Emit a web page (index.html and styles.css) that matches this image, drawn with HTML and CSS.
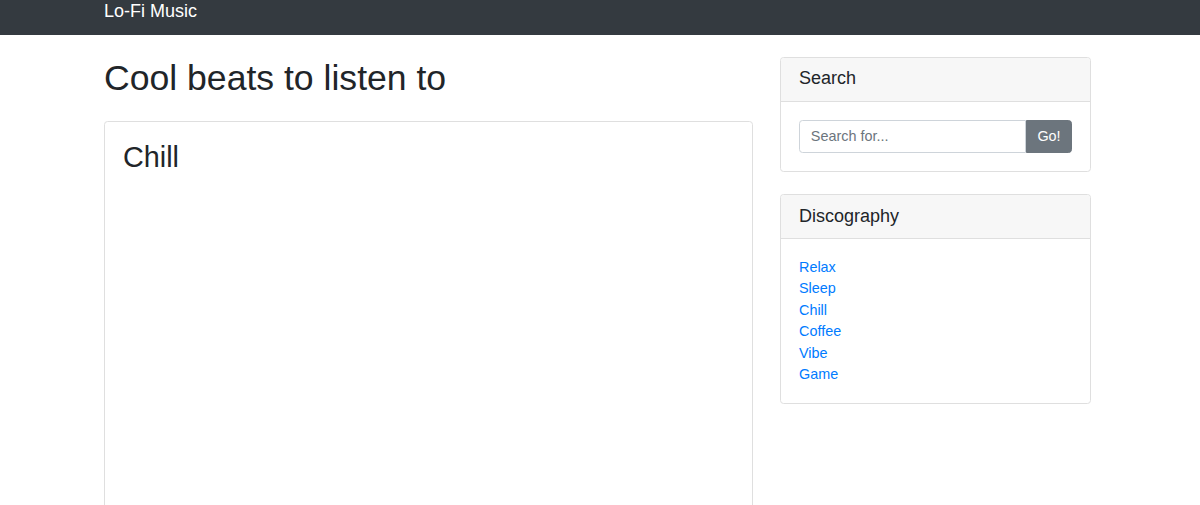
FILE: index.html
```html
<!DOCTYPE html>
<html lang="en">
<head>
    <meta charset="UTF-8">
    <meta name="viewport" content="width=device-width, initial-scale=1.0">
    <title>Lo-Fi Music</title>
    <link rel="stylesheet" href="styles.css">
</head>
<body>
    <nav class="navbar">
        <div class="container">
            <a class="brand" href="#">Lo-Fi Music</a>
        </div>
    </nav>

    <div class="container">
        <div class="row">
            <div class="main">
                <h1 class="page-title">Cool beats to listen to</h1>
                <div class="card player">
                    <div class="card-body">
                        <h2 class="card-title">Chill</h2>
                    </div>
                </div>
            </div>

            <div class="sidebar">
                <div class="card">
                    <h5 class="card-header">Search</h5>
                    <div class="card-body">
                        <div class="input-group">
                            <input type="text" placeholder="Search for...">
                            <button type="button">Go!</button>
                        </div>
                    </div>
                </div>

                <div class="card">
                    <h5 class="card-header">Discography</h5>
                    <div class="card-body">
                        <ul class="links">
                            <li><a href="#">Relax</a></li>
                            <li><a href="#">Sleep</a></li>
                            <li><a href="#">Chill</a></li>
                            <li><a href="#">Coffee</a></li>
                            <li><a href="#">Vibe</a></li>
                            <li><a href="#">Game</a></li>
                        </ul>
                    </div>
                </div>
            </div>
        </div>
    </div>
</body>
</html>
```

FILE: styles.css
```css
body {
    font-family: "Liberation Sans", Arial, sans-serif;
    font-size: 14.4px;
    line-height: 1.5;
    color: #212529;
    margin: 0;
    padding: 0;
    background-color: #fff;
}

.container {
    width: 987px;
    margin-left: 104px;
}

/* top bar */
.navbar {
    background-color: #343a40;
    height: 35px;
}

.brand {
    display: block;
    font-size: 18px;
    line-height: 22px;
    color: #fff;
    text-decoration: none;
}

.row {
    display: grid;
    grid-template-columns: 649px 1fr;
    gap: 27px;
}

.page-title {
    font-size: 35.6px;
    font-weight: 500;
    line-height: 1.2;
    margin: 21.6px 0;
}

.card {
    border: 1px solid #dfdfdf;
    border-radius: 3.6px;
    background-color: #fff;
}

.player {
    height: 420px;
}

.card-body {
    padding: 18px;
}

.card-title {
    font-size: 28.8px;
    font-weight: 500;
    line-height: 1.2;
    margin: 0;
}

.sidebar .card {
    margin-top: 21.6px;
}

.card-header {
    font-size: 18px;
    font-weight: 500;
    line-height: 1.2;
    margin: 0;
    padding: 10.8px 18px;
    background-color: #f7f7f7;
    border-bottom: 1px solid #dfdfdf;
    border-radius: 3.6px 3.6px 0 0;
}

.input-group {
    display: flex;
}

.input-group input {
    flex: 1;
    min-width: 0;
    height: 33.4px;
    box-sizing: border-box;
    padding: 0 10.8px;
    font-family: inherit;
    font-size: 14.4px;
    color: #495057;
    border: 1px solid #ced4da;
    border-radius: 3.6px 0 0 3.6px;
    outline: none;
}

.input-group input::placeholder {
    color: #6c757d;
}

.input-group button {
    width: 46px;
    height: 33.4px;
    font-family: inherit;
    font-size: 14.4px;
    color: #fff;
    background-color: #6c757d;
    border: 1px solid #6c757d;
    border-radius: 0 3.6px 3.6px 0;
    cursor: pointer;
}

.links {
    list-style: none;
    margin: 0;
    padding: 0;
    line-height: 21.4px;
}

.links a {
    color: #007bff;
    text-decoration: none;
}
```
